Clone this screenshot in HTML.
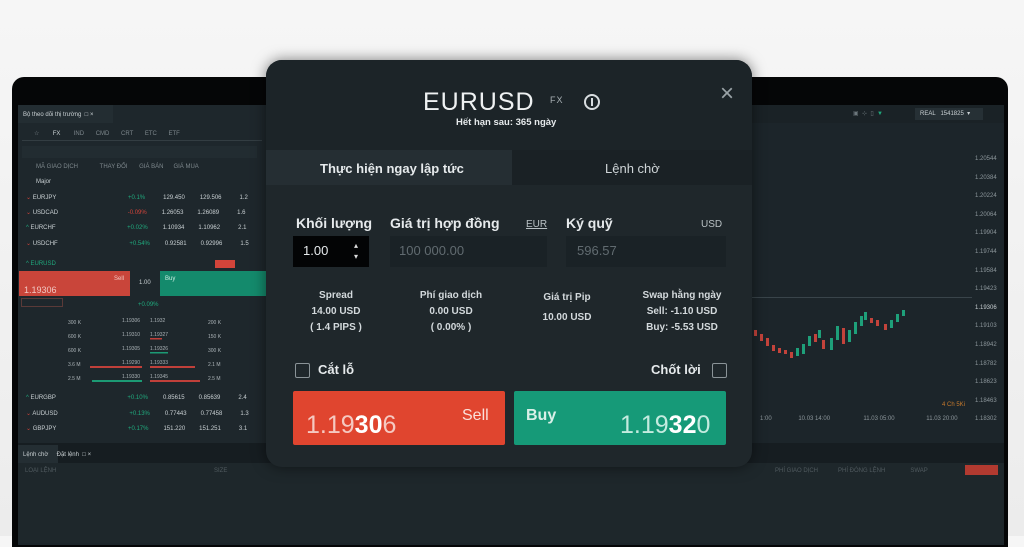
<!DOCTYPE html>
<html><head><meta charset="utf-8"><style>
*{margin:0;padding:0;box-sizing:border-box}
body{width:1024px;height:536px;overflow:hidden;background:linear-gradient(#f6f6f6,#ececec);font-family:"Liberation Sans","DejaVu Sans",sans-serif;position:relative}
.a{position:absolute}
.t{position:absolute;font-size:6px;color:#7d878c;white-space:nowrap}
.w{color:#c9d0d3}
.g{color:#1fa97d}.r{color:#d2443a}
.m{position:absolute;color:#e6eaec;white-space:nowrap}
</style></head><body>
<!-- device -->
<div class="a" style="left:12px;top:77px;width:996px;height:470px;background:#050607;border-radius:12px 12px 0 0"></div>
<div class="a" style="left:18px;top:105px;width:986px;height:440px;background:#1c252a"></div>
<!-- left panel -->
<div class="a" style="left:18px;top:105px;width:250px;height:338px;background:#1e272c"></div>
<div class="a" style="left:18px;top:105px;width:95px;height:18px;background:#232d32"></div>
<div class="t w" style="left:23px;top:112px">Bộ theo dõi thị trường &nbsp;□ ×</div>
<div class="t" style="left:34px;top:130px">☆ &nbsp;&nbsp;&nbsp;&nbsp;&nbsp;&nbsp;&nbsp;<span class="w">FX</span> &nbsp;&nbsp;&nbsp;&nbsp;&nbsp;&nbsp;&nbsp;IND &nbsp;&nbsp;&nbsp;&nbsp;&nbsp;&nbsp;CMD &nbsp;&nbsp;&nbsp;&nbsp;&nbsp;&nbsp;CRT &nbsp;&nbsp;&nbsp;&nbsp;&nbsp;&nbsp;ETC &nbsp;&nbsp;&nbsp;&nbsp;&nbsp;&nbsp;ETF</div>
<div class="a" style="left:22px;top:140px;width:240px;height:1px;background:#333d42"></div>
<div class="a" style="left:22px;top:146px;width:235px;height:12px;background:#222c31"></div>
<div class="t" style="left:36px;top:164px">MÃ GIAO DỊCH &nbsp;&nbsp;&nbsp;&nbsp;&nbsp;&nbsp;&nbsp;&nbsp;&nbsp;&nbsp;&nbsp;&nbsp;THAY ĐỔI &nbsp;&nbsp;&nbsp;&nbsp;&nbsp;&nbsp;GIÁ BÁN &nbsp;&nbsp;&nbsp;&nbsp;&nbsp;GIÁ MUA</div>
<div class="t w" style="left:36px;top:179px">Major</div>
<div class="t w" style="left:26px;top:194px"><span class="r">⌄</span> EURJPY <span style="margin-left:70px" class="g">+0.1%</span><span style="margin-left:18px">129.450</span><span style="margin-left:15px">129.506</span><span style="margin-left:18px">1.2</span></div>
<div class="t w" style="left:26px;top:209px"><span class="r">⌄</span> USDCAD <span style="margin-left:68px" class="r">-0.09%</span><span style="margin-left:15px">1.26053</span><span style="margin-left:14px">1.26089</span><span style="margin-left:18px">1.6</span></div>
<div class="t w" style="left:26px;top:225px"><span class="g">^</span> EURCHF <span style="margin-left:70px" class="g">+0.02%</span><span style="margin-left:15px">1.10934</span><span style="margin-left:14px">1.10962</span><span style="margin-left:18px">2.1</span></div>
<div class="t w" style="left:26px;top:240px"><span class="r">⌄</span> USDCHF <span style="margin-left:70px" class="g">+0.54%</span><span style="margin-left:15px">0.92581</span><span style="margin-left:14px">0.92996</span><span style="margin-left:18px">1.5</span></div>
<div class="t g" style="left:26px;top:261px">^ EURUSD</div>
<div class="a" style="left:215px;top:260px;width:20px;height:8px;background:#d2443a"></div>
<div class="a" style="left:19px;top:271px;width:111px;height:25px;background:#c9453a"></div>
<div class="t" style="left:114px;top:276px;color:#f1c7c2">Sell</div>
<div class="t" style="left:24px;top:285px;color:#f1c7c2;font-size:9px">1.19306</div>
<div class="t w" style="left:139px;top:280px">1.00</div>
<div class="a" style="left:160px;top:271px;width:108px;height:25px;background:#148a6c"></div>
<div class="t" style="left:165px;top:276px;color:#cdeee3">Buy</div>
<div class="a" style="left:21px;top:298px;width:42px;height:9px;border:1px solid #5a3a38"></div>
<div class="t g" style="left:138px;top:302px">+0.09%</div>
<svg class="a" style="left:60px;top:315px" width="200" height="75">
<g font-size="5" fill="#aab2b6" font-family="Liberation Sans">
<text x="8" y="9">300 K</text><text x="8" y="23">600 K</text><text x="8" y="37">600 K</text><text x="8" y="51">3.6 M</text><text x="8" y="65">2.5 M</text>
<text x="62" y="7">1.19306</text><text x="90" y="7">1.1932</text><text x="62" y="21">1.19310</text><text x="90" y="21">1.19327</text><text x="62" y="35">1.19305</text><text x="90" y="35">1.19326</text><text x="62" y="49">1.19290</text><text x="90" y="49">1.19333</text><text x="62" y="63">1.19330</text><text x="90" y="63">1.19345</text>
<text x="148" y="9">200 K</text><text x="148" y="23">150 K</text><text x="148" y="37">300 K</text><text x="148" y="51">2.1 M</text><text x="148" y="65">2.5 M</text></g>
<rect x="30" y="51" width="52" height="2" fill="#c0403a"/><rect x="90" y="51" width="45" height="2" fill="#c0403a"/>
<rect x="32" y="65" width="50" height="2" fill="#1c9a74"/><rect x="90" y="65" width="50" height="2" fill="#c0403a"/>
<rect x="90" y="23" width="12" height="1.5" fill="#c0403a"/><rect x="90" y="37" width="18" height="1.5" fill="#1c9a74"/>
</svg>
<div class="t w" style="left:26px;top:395px"><span class="g">^</span> EURGBP <span style="margin-left:70px" class="g">+0.10%</span><span style="margin-left:15px">0.85615</span><span style="margin-left:14px">0.85639</span><span style="margin-left:18px">2.4</span></div>
<div class="t w" style="left:26px;top:410px"><span class="r">⌄</span> AUDUSD <span style="margin-left:70px" class="g">+0.13%</span><span style="margin-left:15px">0.77443</span><span style="margin-left:14px">0.77458</span><span style="margin-left:18px">1.3</span></div>
<div class="t w" style="left:26px;top:425px"><span class="r">⌄</span> GBPJPY <span style="margin-left:70px" class="g">+0.17%</span><span style="margin-left:15px">151.220</span><span style="margin-left:14px">151.251</span><span style="margin-left:18px">3.1</span></div>
<!-- bottom panel -->
<div class="a" style="left:18px;top:443px;width:986px;height:20px;background:#161d21"></div>
<div class="a" style="left:18px;top:445px;width:40px;height:18px;background:#242e33"></div>
<div class="t w" style="left:23px;top:452px">Lệnh chờ &nbsp;&nbsp;&nbsp;&nbsp;Đặt lệnh &nbsp;□ ×</div>
<div class="a" style="left:18px;top:463px;width:986px;height:80px;background:#1e272b"></div>
<div class="t" style="left:25px;top:468px;color:#505a5f">LOẠI LỆNH</div>
<div class="t" style="left:214px;top:468px;color:#505a5f">SIZE</div>
<div class="t" style="left:775px;top:468px;color:#505a5f">PHÍ GIAO DỊCH &nbsp;&nbsp;&nbsp;&nbsp;&nbsp;&nbsp;&nbsp;&nbsp;&nbsp;&nbsp;&nbsp;PHÍ ĐÓNG LỆNH &nbsp;&nbsp;&nbsp;&nbsp;&nbsp;&nbsp;&nbsp;&nbsp;&nbsp;&nbsp;&nbsp;&nbsp;&nbsp;&nbsp;SWAP</div>
<div class="a" style="left:965px;top:465px;width:33px;height:10px;background:#b23a30"></div>
<!-- top right toolbar -->
<div class="a" style="left:752px;top:105px;width:252px;height:18px;background:#1a2226"></div>
<div class="t" style="left:853px;top:110px;color:#6c777c">▣ &nbsp;⊹ &nbsp;▯ &nbsp;<span class="g">▼</span></div>
<div class="a" style="left:915px;top:108px;width:68px;height:12px;background:#263035"></div>
<div class="t w" style="left:920px;top:110px">REAL &nbsp;&nbsp;1541825 &nbsp;▾</div>
<!-- chart axis -->
<div class="t" style="left:975px;top:150px;line-height:18.6px;color:#8c969b">1.20544<br>1.20384<br>1.20224<br>1.20064<br>1.19904<br>1.19744<br>1.19584<br>1.19423<br><span class="w">1.19306</span><br>1.19103<br>1.18942<br>1.18782<br>1.18623<br>1.18463<br>1.18302</div>
<div class="a" style="left:752px;top:297px;width:220px;height:1px;background:#39444a"></div>
<div class="t" style="left:760px;top:416px;color:#8c969b">1:00 &nbsp;&nbsp;&nbsp;&nbsp;&nbsp;&nbsp;&nbsp;&nbsp;&nbsp;&nbsp;&nbsp;&nbsp;&nbsp;&nbsp;&nbsp;10.03 14:00 &nbsp;&nbsp;&nbsp;&nbsp;&nbsp;&nbsp;&nbsp;&nbsp;&nbsp;&nbsp;&nbsp;&nbsp;&nbsp;&nbsp;&nbsp;&nbsp;&nbsp;&nbsp;&nbsp;11.03 05:00 &nbsp;&nbsp;&nbsp;&nbsp;&nbsp;&nbsp;&nbsp;&nbsp;&nbsp;&nbsp;&nbsp;&nbsp;&nbsp;&nbsp;&nbsp;&nbsp;&nbsp;&nbsp;11.03 20:00</div>
<div class="t" style="left:942px;top:402px;color:#c77a2c">4 Ch 5Ki</div>
<svg class="a" style="left:752px;top:290px" width="160" height="80">
<g fill="#c3433b"><rect x="2" y="40" width="3" height="6"/><rect x="8" y="44" width="3" height="7"/><rect x="14" y="48" width="3" height="8"/><rect x="20" y="55" width="3" height="6"/><rect x="26" y="58" width="3" height="5"/><rect x="32" y="60" width="3" height="4"/><rect x="38" y="62" width="3" height="6"/><rect x="62" y="44" width="3" height="8"/><rect x="70" y="50" width="3" height="9"/><rect x="90" y="38" width="3" height="16"/><rect x="118" y="28" width="3" height="5"/><rect x="124" y="30" width="3" height="6"/><rect x="132" y="34" width="3" height="6"/></g>
<g fill="#1ea07a"><rect x="44" y="58" width="3" height="8"/><rect x="50" y="54" width="3" height="10"/><rect x="56" y="46" width="3" height="10"/><rect x="66" y="40" width="3" height="8"/><rect x="78" y="48" width="3" height="12"/><rect x="84" y="36" width="3" height="14"/><rect x="96" y="40" width="3" height="12"/><rect x="102" y="32" width="3" height="12"/><rect x="108" y="26" width="3" height="10"/><rect x="112" y="22" width="3" height="8"/><rect x="138" y="30" width="3" height="8"/><rect x="144" y="24" width="3" height="8"/><rect x="150" y="20" width="3" height="6"/></g>
</svg>
<!-- modal -->
<div class="a" style="left:266px;top:60px;width:486px;height:407px;background:#1f272b;border-radius:16px;box-shadow:0 0 14px rgba(0,0,0,.5);overflow:hidden">
<div class="a" style="left:0;top:0;width:486px;height:90px;background:#1c2428"></div>
<div class="a" style="left:0;top:90px;width:246px;height:35px;background:#252e33"></div>
<div class="a" style="left:246px;top:90px;width:240px;height:35px;background:#1a2125"></div>
</div>
<div class="m" style="left:423px;top:88px;font-size:25px;letter-spacing:1px;color:#eef1f2">EURUSD</div>
<div class="m" style="left:550px;top:95px;font-size:9px;color:#a9b1b5;letter-spacing:1px">FX</div>
<div class="a" style="left:584px;top:94px;width:16px;height:16px;border:2px solid #d8dde0;border-radius:50%"></div>
<div class="a" style="left:591px;top:98px;width:2px;height:8px;background:#d8dde0"></div>
<div class="m" style="left:720px;top:80px;font-size:24px;color:#9aa3a7">×</div>
<div class="m" style="left:456px;top:117px;font-size:9.5px;font-weight:bold">Hết hạn sau: 365 ngày</div>
<div class="m" style="left:320px;top:161px;font-size:13px;font-weight:bold">Thực hiện ngay lập tức</div>
<div class="m" style="left:605px;top:161px;font-size:13px;color:#cfd5d8">Lệnh chờ</div>
<div class="m" style="left:296px;top:215px;font-size:14px;font-weight:bold">Khối lượng</div>
<div class="m" style="left:390px;top:215px;font-size:14px;font-weight:bold">Giá trị hợp đồng</div>
<div class="m" style="left:526px;top:219px;font-size:10px;text-decoration:underline;color:#b8c0c3">EUR</div>
<div class="m" style="left:566px;top:215px;font-size:14px;font-weight:bold">Ký quỹ</div>
<div class="m" style="left:701px;top:219px;font-size:10px;color:#b8c0c3">USD</div>
<div class="a" style="left:293px;top:236px;width:76px;height:31px;background:#030405"></div>
<div class="m" style="left:303px;top:243px;font-size:13px">1.00</div>
<div class="m" style="left:354px;top:240px;font-size:8px;line-height:11px;color:#ddd">▴<br>▾</div>
<div class="a" style="left:390px;top:236px;width:157px;height:31px;background:#1a2226"></div>
<div class="m" style="left:399px;top:243px;font-size:13px;color:#616b70">100 000.00</div>
<div class="a" style="left:566px;top:236px;width:160px;height:31px;background:#1a2226"></div>
<div class="m" style="left:577px;top:243px;font-size:13px;color:#616b70">596.57</div>
<div class="m" style="left:296px;top:288px;width:80px;text-align:center;font-size:10px;font-weight:bold;line-height:16px;color:#d3d9dc">Spread<br>14.00 USD<br>( 1.4 PIPS )</div>
<div class="m" style="left:411px;top:288px;width:80px;text-align:center;font-size:10px;font-weight:bold;line-height:16px;color:#d3d9dc">Phí giao dịch<br>0.00 USD<br>( 0.00% )</div>
<div class="m" style="left:527px;top:288px;width:80px;text-align:center;font-size:10px;font-weight:bold;line-height:20px;color:#d3d9dc">Giá trị Pip<br>10.00 USD</div>
<div class="m" style="left:632px;top:288px;width:100px;text-align:center;font-size:10px;font-weight:bold;line-height:16px;color:#d3d9dc">Swap hằng ngày<br>Sell: -1.10 USD<br>Buy: -5.53 USD</div>
<div class="a" style="left:295px;top:363px;width:15px;height:15px;border:1.5px solid #8a9397;border-radius:2px"></div>
<div class="m" style="left:318px;top:362px;font-size:13px;font-weight:bold">Cắt lỗ</div>
<div class="m" style="left:651px;top:362px;font-size:13px;font-weight:bold">Chốt lời</div>
<div class="a" style="left:712px;top:363px;width:15px;height:15px;border:1.5px solid #8a9397;border-radius:2px"></div>
<div class="a" style="left:293px;top:391px;width:212px;height:54px;background:#e0452f;border-radius:2px"></div>
<div class="m" style="left:306px;top:411px;font-size:25px;color:#f5c9c1">1.19<b style="color:#fff">30</b>6</div>
<div class="m" style="left:462px;top:407px;font-size:16px;color:#fbe0da">Sell</div>
<div class="a" style="left:514px;top:391px;width:212px;height:54px;background:#169a78;border-radius:2px"></div>
<div class="m" style="left:526px;top:407px;font-size:16px;font-weight:bold;color:#d8f0e8">Buy</div>
<div class="m" style="left:620px;top:411px;font-size:25px;color:#c4ebdf">1.19<b style="color:#fff">32</b>0</div>
</body></html>
